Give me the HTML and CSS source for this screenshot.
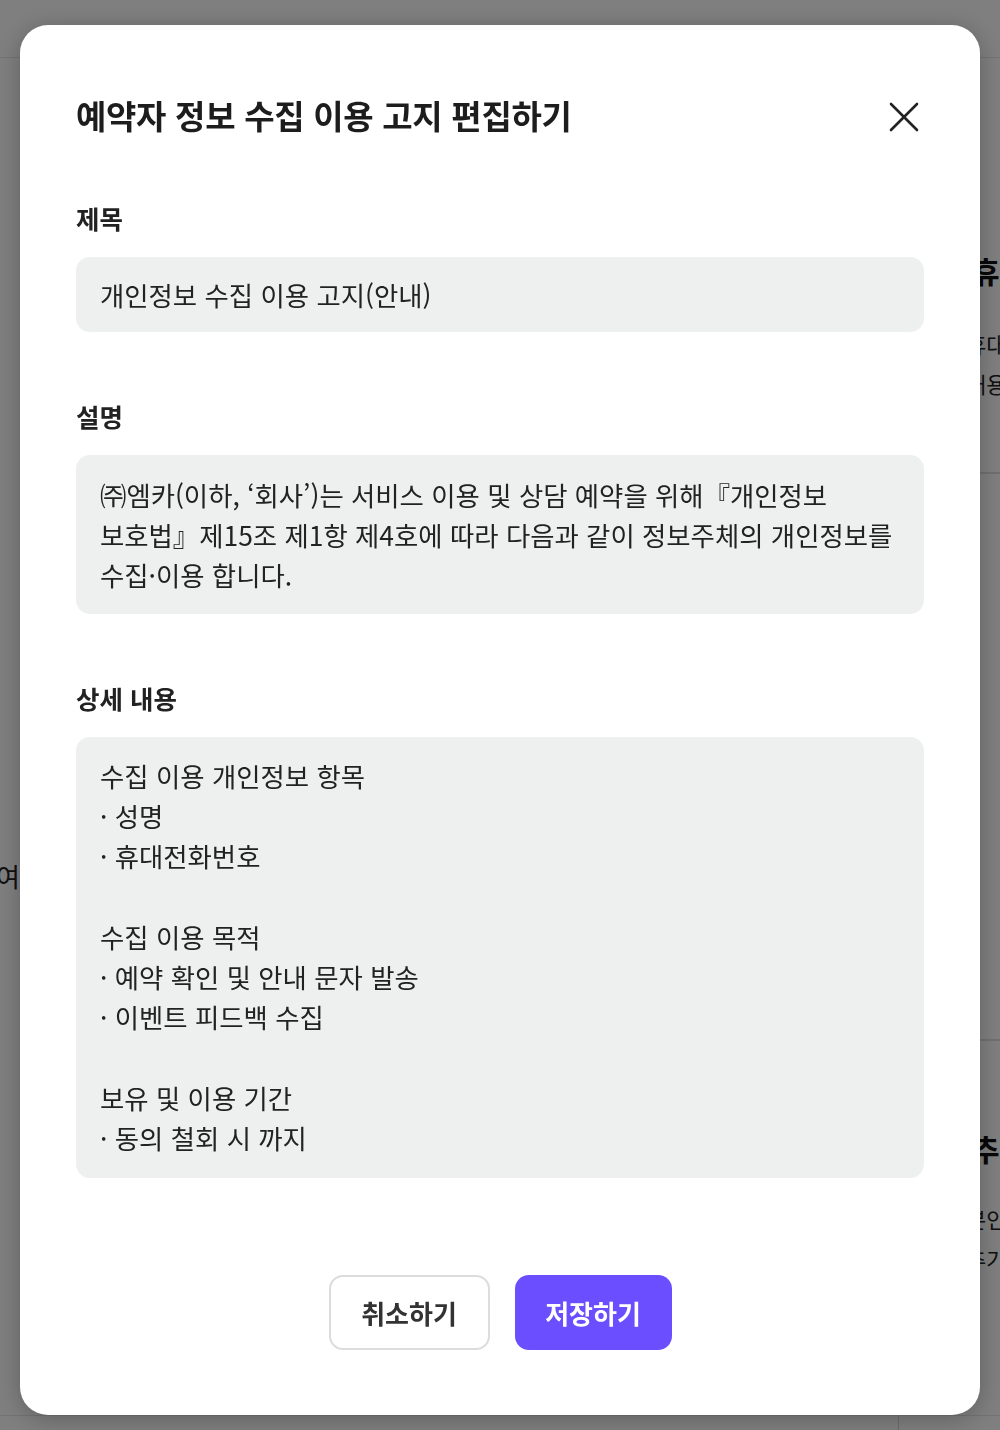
FILE: index.html
```html
<!DOCTYPE html>
<html lang="ko">
<head>
<meta charset="utf-8">
<title>예약자 정보 수집 이용 고지 편집하기</title>
<link rel="stylesheet" href="styles.css">
</head>
<body>
<div class="page">
  <header class="page-header"></header>
  <div class="page-body">
    <div class="page-left">
      <p class="page-fragment">여</p>
    </div>
    <div class="page-right">
      <h3 class="side-title">휴대폰 번호</h3>
      <p class="side-text">휴대폰 번호를 입력</p>
      <p class="side-text tight">내용을 확인</p>
      <div class="side-card"></div>
      <h3 class="side-title second">추가 정보</h3>
      <p class="side-text">본인인증</p>
      <p class="side-text tight">추가하기</p>
    </div>
  </div>
  <footer class="page-footer"><div class="footer-cell"></div></footer>
</div>

<div class="overlay">
  <div class="modal">
    <div class="modal-head">
      <h2 class="modal-title">예약자 정보 수집 이용 고지 편집하기</h2>
      <button class="close-btn" aria-label="닫기">
        <svg width="40" height="40" viewBox="0 0 40 40"><path d="M7 7 L33 33 M33 7 L7 33" stroke="#222" stroke-width="2.6" stroke-linecap="round" fill="none"/></svg>
      </button>
    </div>

    <section class="field first">
      <h3 class="field-label">제목</h3>
      <div class="field-box single">개인정보 수집 이용 고지(안내)</div>
    </section>

    <section class="field">
      <h3 class="field-label">설명</h3>
      <div class="field-box multi">㈜엠카(이하, ‘회사’)는 서비스 이용 및 상담 예약을 위해『개인정보<br>보호법』제15조 제1항 제4호에 따라 다음과 같이 정보주체의 개인정보를<br>수집·이용 합니다.</div>
    </section>

    <section class="field">
      <h3 class="field-label">상세 내용</h3>
      <div class="field-box detail">
        <p>수집 이용 개인정보 항목</p>
        <p>· 성명</p>
        <p>· 휴대전화번호</p>
        <p>&nbsp;</p>
        <p>수집 이용 목적</p>
        <p>· 예약 확인 및 안내 문자 발송</p>
        <p>· 이벤트 피드백 수집</p>
        <p>&nbsp;</p>
        <p>보유 및 이용 기간</p>
        <p>· 동의 철회 시 까지</p>
      </div>
    </section>

    <div class="actions">
      <button class="btn btn-cancel">취소하기</button>
      <button class="btn btn-save">저장하기</button>
    </div>
  </div>
</div>
</body>
</html>
```

FILE: styles.css
```css
* { box-sizing: border-box; }
html, body { margin: 0; padding: 0; }
body {
  width: 1000px;
  height: 1430px;
  overflow: hidden;
  background: #ffffff;
  font-family: "Noto Sans CJK KR", "Noto Sans", sans-serif;
  color: #222;
}

/* underlying page (dimmed by the overlay) */
.page { display: flex; flex-direction: column; height: 1430px; }
.page-header { height: 58px; border-bottom: 1px solid #e8e8e8; flex: none; }
.page-body { display: flex; flex: 1; }
.page-left { flex: 1; padding-top: 800px; }
.page-fragment { margin: 0 0 0 -4px; font-size: 26px; line-height: 36px; color: #222; }
.page-right { width: 28px; flex: none; padding-top: 192px; white-space: nowrap; }
.side-title { margin: 0 0 36px; font-size: 30px; line-height: 40px; font-weight: 700; color: #111; }
.side-title.second { margin-top: 87px; margin-bottom: 33px; }
.side-text { margin: 0 0 0 -6px; font-size: 22px; line-height: 34px; color: #222; }
.side-text.tight { margin-top: 6px; }
.side-card {
  margin-top: 72px;
  height: 569px;
  border: 2px solid #e0e0e0;
  border-radius: 22px;
  margin-left: -60px;
  width: 140px;
}
.page-footer { height: 15px; border-top: 1px solid #e4e4e4; display: flex; justify-content: flex-end; flex: none; margin-top: auto; }
.footer-cell { width: 102px; border-left: 1px solid #d8d8d8; }

/* overlay + modal */
.overlay {
  position: fixed;
  inset: 0;
  background: rgba(0, 0, 0, 0.5);
  padding: 25px 20px;
  display: flex;
  flex-direction: column;
  align-items: stretch;
}
.modal {
  background: #fff;
  border-radius: 28px;
  padding: 68px 56px 65px;
  box-shadow: 0 4px 24px rgba(0, 0, 0, 0.25);
  display: flex;
  flex-direction: column;
}
.modal-head {
  display: flex;
  align-items: center;
  justify-content: space-between;
  height: 44px;
}
.modal-title {
  margin: 0;
  font-size: 33px;
  line-height: 44px;
  font-weight: 700;
  letter-spacing: -0.3px;
  color: #1d1d1d;
}
.close-btn {
  width: 40px;
  height: 40px;
  padding: 0;
  border: 0;
  background: none;
  display: flex;
  margin-top: 4px;
}

.field { margin-top: 67px; }
.field.first { margin-top: 64px; }
.field-label {
  margin: 0 0 22px;
  font-size: 25.5px;
  line-height: 34px;
  font-weight: 700;
  color: #222;
}
.field-box {
  background: #eef0f0;
  border-radius: 14px;
  padding: 0 24px;
  font-size: 26.4px;
  color: #222;
}
.field-box.single { padding-top: 18px; padding-bottom: 17px; line-height: 40px; height: 75px; }
.field-box.multi { padding-top: 20px; padding-bottom: 19px; line-height: 40px; white-space: nowrap; }
.field-box.detail { padding-top: 19px; padding-bottom: 20px; line-height: 40.2px; }
.field-box.detail p { margin: 0; }

.actions {
  margin-top: 97px;
  display: flex;
  justify-content: center;
  gap: 25px;
}
.btn {
  height: 75px;
  border-radius: 14px;
  font-family: inherit;
  font-size: 26px;
  font-weight: 700;
  cursor: pointer;
}
.btn-cancel {
  width: 161px;
  background: #fff;
  border: 2px solid #dcdcdc;
  color: #333;
}
.btn-save {
  width: 157px;
  background: #6b4eff;
  border: 0;
  color: #fff;
}
```
